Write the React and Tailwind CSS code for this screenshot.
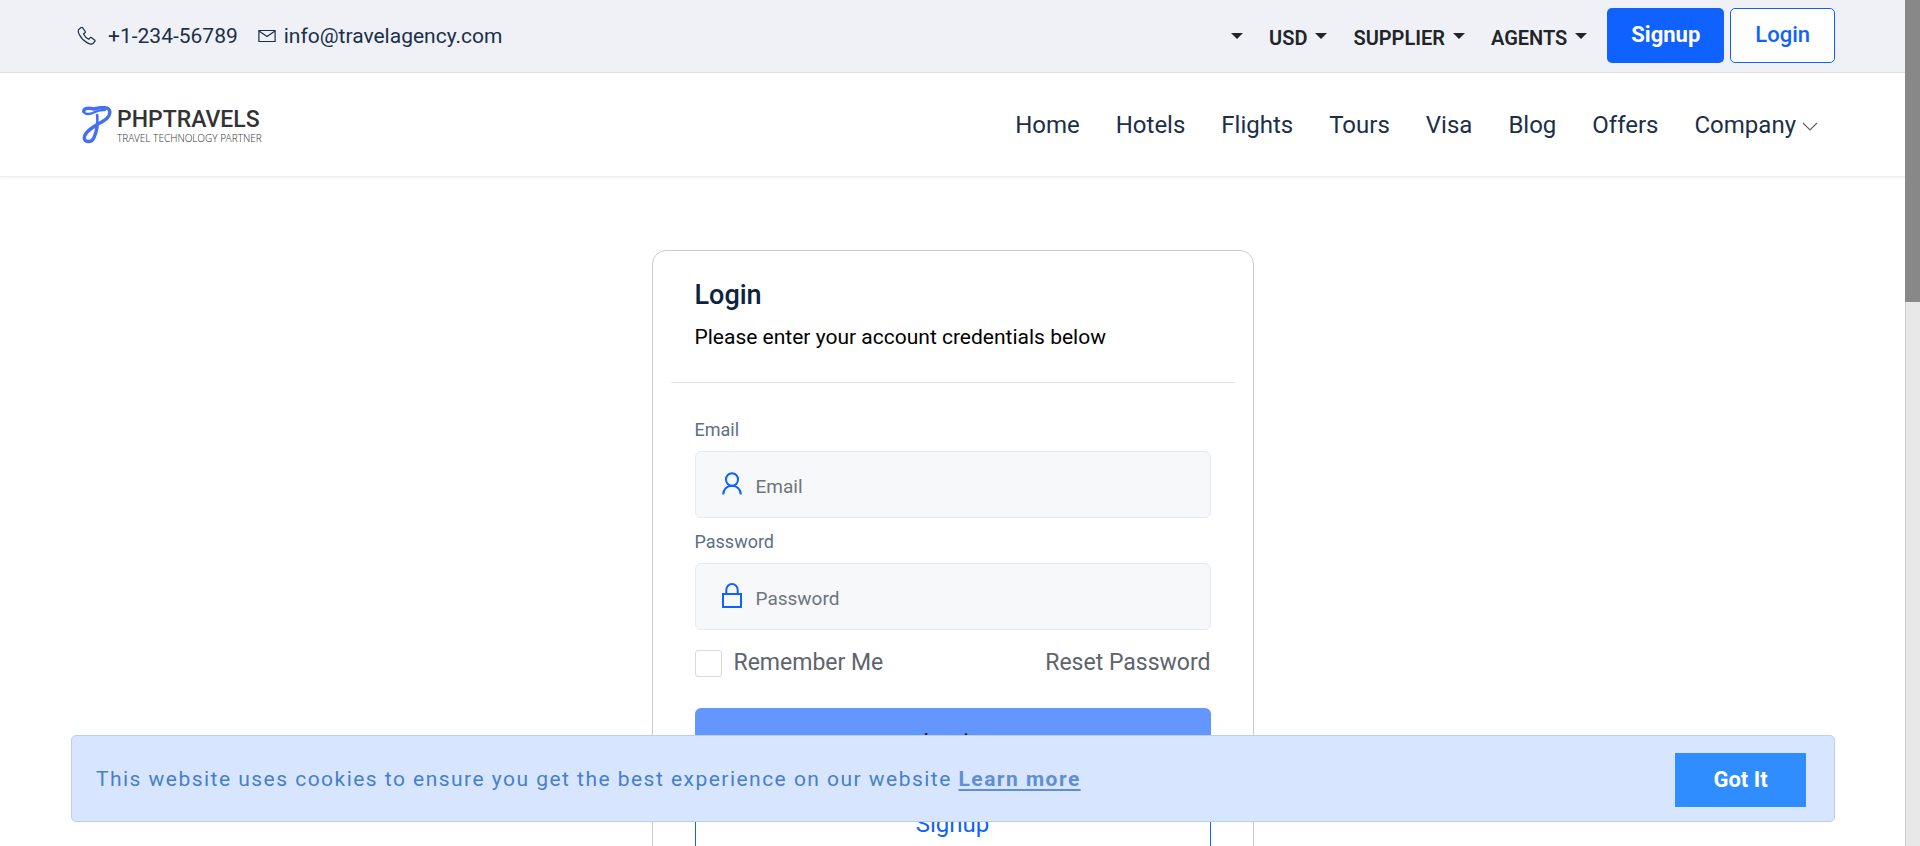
const nav = ["Home", "Hotels", "Flights", "Tours", "Visa", "Blog", "Offers"];

function Caret() {
  return <span className="mt-[-4px] h-0 w-0 border-x-6 border-t-6 border-x-transparent border-t-[#212529]" />;
}

function TopMenu({ label, name }) {
  return (
    <button type="button" aria-label={name} className="flex items-center gap-2 text-[20px] leading-6 font-semibold text-[#212529]">
      {label}
      <Caret />
    </button>
  );
}

function TopBar() {
  return (
    <div className="border-b border-[#e0e3e8] bg-[#eff1f6]">
      <div className="flex h-[72px] items-center justify-between pr-[70px] pl-[71px]">
        <div className="flex items-center gap-5 text-[21px] leading-6 text-[#1b2f49]">
          <a href="tel:+1-234-56789" className="flex items-center gap-[11px] pl-1.5">
            <svg viewBox="0 0 20 20" className="h-5 w-5" fill="none" stroke="currentColor" strokeWidth="1.2">
              <path d="M4.2 1.6 2 3.2C1 4 1 6 2.400 8.700c1.700 3.200 4.900 6.500 8 8.200 2.600 1.400 4.700 1.500 5.600.6l1.800-2.200c.4-.5.300-1-.2-1.400l-3.300-2.300c-.5-.3-1-.2-1.300.2l-1.200 1.500c-2-.9-4.300-3.200-5.300-5.300l1.500-1.200c.4-.4.500-.8.2-1.300L5.700 1.800c-.4-.6-.9-.7-1.500-.2Z" />
            </svg>
            +1-234-56789
          </a>
          <a href="mailto:info@travelagency.com" className="flex items-center gap-2">
            <svg viewBox="0 0 18 18" className="h-[18px] w-[18px]" fill="none" stroke="currentColor" strokeWidth="1.2">
              <path d="M.9 3.500h16.200v11H.9zM1 4l8 5.500L17 4" />
            </svg>
            info@travelagency.com
          </a>
        </div>
        <div className="flex items-center gap-5">
          <div className="flex items-center gap-[26px] pt-1">
            <TopMenu name="Language" />
            <TopMenu label="USD" />
            <TopMenu label="SUPPLIER" />
            <TopMenu label="AGENTS" />
          </div>
          <div className="flex gap-1.5 pb-0.5">
            <a href="#signup" className="flex h-[55px] items-center rounded-[5px] bg-[#0f62ff] px-6 text-[22px] leading-6 font-bold text-white">Signup</a>
            <a href="#login" className="flex h-[55px] items-center rounded-[5px] border border-[#0f62ff] bg-white px-6 text-[22px] leading-6 font-medium text-[#0f62ff]">Login</a>
          </div>
        </div>
      </div>
    </div>
  );
}

function Logo() {
  return (
    <a href="#home" aria-label="PHPTRAVELS home" className="flex items-center gap-[5px] pl-[11px]">
      <svg viewBox="0 0 30 38" className="h-[38px] w-[30px]" fill="none" stroke="#4470f4" strokeLinecap="round" strokeLinejoin="round">
        <path d="M1.800 5.500C1.500 2 7 1.500 12 3c7-2 15-2.500 15.800 2.500.7 6.500-6.800 9.500-13.300 13.500C8 23 2.200 27 2.300 32c.2 4.500 7 5 9.500 0 2-4 2.700-7 3.200-11" strokeWidth="3.4" />
        <path d="M15 21c.4-4 .6-8 .2-12" strokeWidth="2.6" />
        <path d="M1.800 5.500c1 3.500 6.200 3 10 1 3.200-1.700 7-2.800 11-2.500" strokeWidth="2.4" />
      </svg>
      <span className="flex flex-col">
        <span className="text-[23px] leading-[26px] font-medium text-[#333]">PHPTRAVELS</span>
        <span className="font-['Noto_Sans',sans-serif] text-[10px] leading-[10px] font-light text-[#444]">TRAVEL TECHNOLOGY PARTNER</span>
      </span>
    </a>
  );
}

function Header() {
  return (
    <header className="border-b border-[#eee] bg-white shadow-[0_1px_3px_rgba(0,0,0,0.06)]">
      <div className="flex h-[103px] items-center justify-between pr-[70px] pl-[71px]">
        <Logo />
        <nav className="flex items-center gap-9 pr-[17px] text-[24px] leading-8 text-[#1b2f49]">
          {nav.map((item) => (
            <a key={item} href={"#" + item.toLowerCase()}>{item}</a>
          ))}
          <button type="button" className="flex items-center gap-1.5">
            Company
            <svg viewBox="0 0 16 10" className="mt-1 h-2.5 w-4" fill="none" stroke="#5d646d" strokeWidth="1.2">
              <path d="m1 1 7 7 7-7" />
            </svg>
          </button>
        </nav>
      </div>
    </header>
  );
}

function UserIcon() {
  return (
    <svg viewBox="0 0 20 24" className="h-6 w-5" fill="none" stroke="#0f62ff" strokeWidth="2">
      <ellipse cx="10" cy="7.500" rx="6" ry="6.300" />
      <path d="M1.200 22.500c0-5 3.800-8.700 8.800-8.700s8.800 3.700 8.800 8.700" />
    </svg>
  );
}

function LockIcon() {
  return (
    <svg viewBox="0 0 20 26" className="h-[26px] w-5" fill="none" stroke="#0f62ff" strokeWidth="2">
      <path d="M1 11h18v13H1zM4.300 11V6.700a5.700 5.700 0 0 1 11.400 0V11" />
    </svg>
  );
}

function Field({ id, label, type, icon }) {
  return (
    <div>
      <label htmlFor={id} className="block text-[18px] leading-[27px] text-[#5d6f87]">{label}</label>
      <div className="mt-2 flex h-[67px] items-center gap-3.5 rounded-[6px] border border-[#e6ebf1] bg-[#f7f8fa] px-[26px] pb-0.5">
        {icon}
        <input id={id} type={type} placeholder={label} className="min-w-0 flex-1 bg-transparent pt-1.5 text-[19px] leading-6 outline-none placeholder:text-[#6c757d]" />
      </div>
    </div>
  );
}

function LoginCard() {
  return (
    <main className="mx-auto mt-[73px] w-[602px] rounded-[14px] border border-[#ccc] bg-white px-[18px]">
      <div className="border-b border-[#dee2e6] px-6 pt-7 pb-[30px]">
        <h1 className="text-[27px] leading-8 font-medium text-[#0d233e]">Login</h1>
        <p className="mt-[11px] text-[21px] leading-[30px] text-black">Please enter your account credentials below</p>
      </div>
      <form className="px-6 pt-[33px] pb-10" onSubmit={(e) => e.preventDefault()}>
        <div className="flex flex-col gap-2.5">
          <Field id="email" label="Email" type="email" icon={<UserIcon />} />
          <Field id="password" label="Password" type="password" icon={<LockIcon />} />
        </div>
        <div className="mt-[17px] flex items-center justify-between text-[23px] leading-8 text-[#5d646d]">
          <label className="flex items-center gap-3">
            <input type="checkbox" className="h-[27px] w-[27px] appearance-none rounded-[3px] border border-[#d8dade] bg-white" />
            Remember Me
          </label>
          <a href="#reset">Reset Password</a>
        </div>
        <button type="submit" className="mt-[29px] block h-[67px] w-full rounded-[6px] bg-[#6396ff] text-[24px] text-[#212529]">Login</button>
        <a href="#signup" className="mt-[15px] flex h-[67px] items-center justify-center rounded-[6px] border border-[#0f62ff] text-[24px] text-[#0f62ff]">Signup</a>
      </form>
    </main>
  );
}

function CookieBar() {
  return (
    <div className="absolute right-[70px] bottom-6 left-[71px] flex h-[87px] items-center justify-between rounded-[5px] border border-[#b4d0fb] bg-[#d7e6fe] pr-7 pl-6">
      <p className="text-[21px] leading-[30px] tracking-[0.07em] text-[#477fcb]">
        This website uses cookies to ensure you get the best experience on our website{" "}
        <a href="#learn" className="font-bold text-[#5f8fd2] underline decoration-2 underline-offset-3">Learn more</a>
      </p>
      <button type="button" className="mt-0.5 h-[54px] w-[131px] bg-[#2f8dff] text-[22px] leading-6 font-bold text-white">Got It</button>
    </div>
  );
}

export default function App() {
  return (
    <div className="flex h-screen overflow-hidden bg-white font-[Roboto,sans-serif]">
      <div className="relative min-w-0 flex-1 overflow-hidden">
        <TopBar />
        <Header />
        <LoginCard />
        <CookieBar />
      </div>
      <div className="w-[15px] border-l border-[#ccc] bg-[#e8e8e8]">
        <div className="-ml-px h-[302px] bg-[#888]" />
      </div>
    </div>
  );
}
